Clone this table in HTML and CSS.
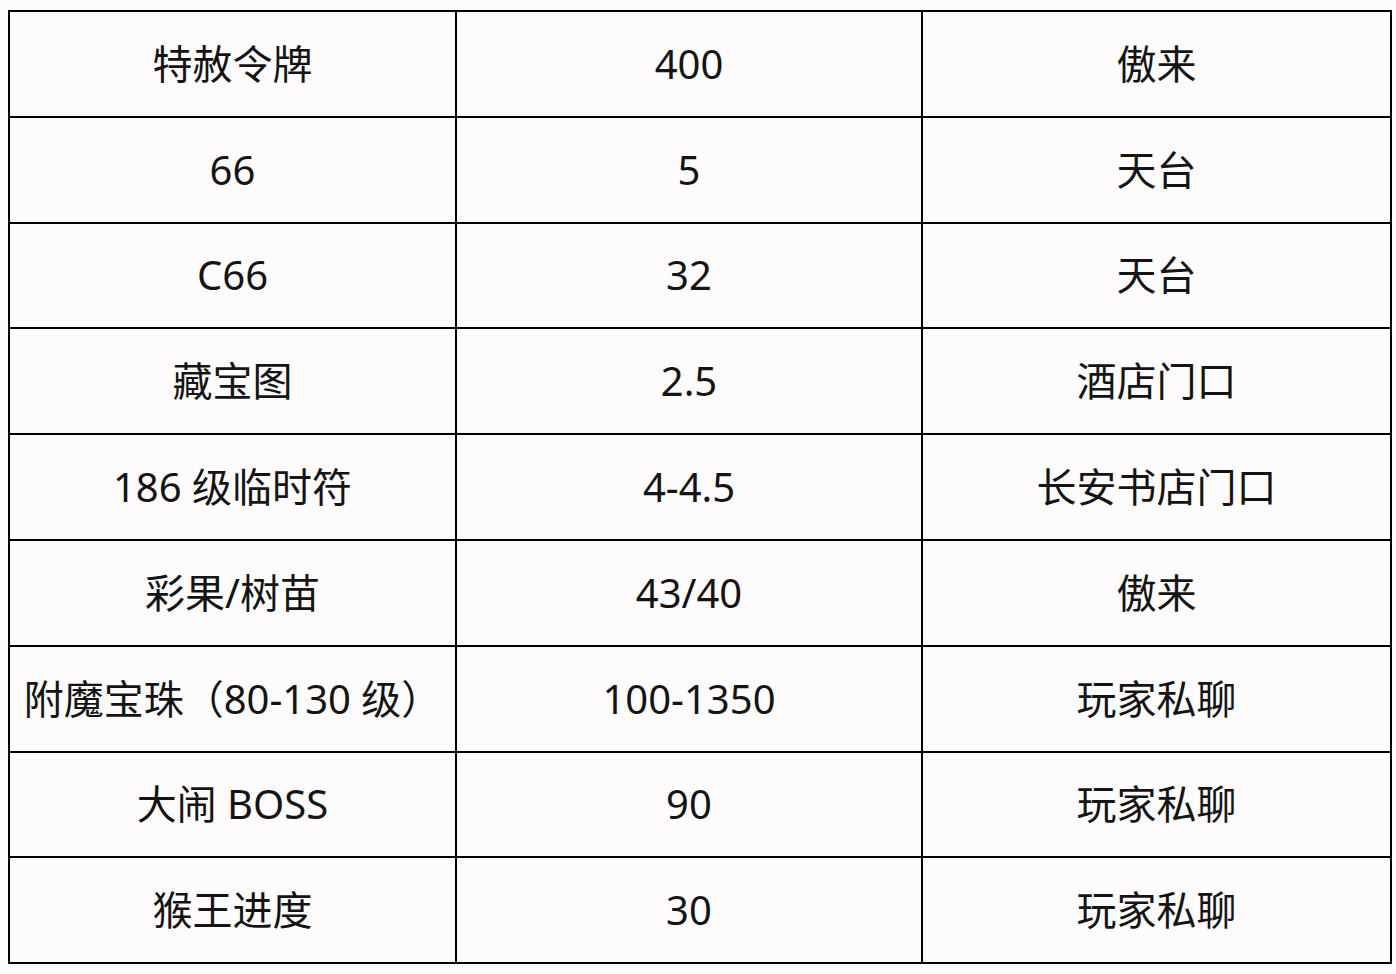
FILE: index.html
```html
<!DOCTYPE html>
<html lang="zh-CN">
<head>
<meta charset="utf-8">
<title>价格表</title>
<link rel="stylesheet" href="styles.css">
</head>
<body>
<table class="price-table">
  <colgroup>
    <col class="col-a">
    <col class="col-b">
    <col class="col-c">
  </colgroup>
  <tbody>
    <tr><td>特赦令牌</td><td>400</td><td>傲来</td></tr>
    <tr><td>66</td><td>5</td><td>天台</td></tr>
    <tr><td>C66</td><td>32</td><td>天台</td></tr>
    <tr><td>藏宝图</td><td>2.5</td><td>酒店门口</td></tr>
    <tr><td>186 级临时符</td><td>4-4.5</td><td>长安书店门口</td></tr>
    <tr><td>彩果/树苗</td><td>43/40</td><td>傲来</td></tr>
    <tr><td>附魔宝珠（80-130 级）</td><td>100-1350</td><td>玩家私聊</td></tr>
    <tr><td>大闹 BOSS</td><td>90</td><td>玩家私聊</td></tr>
    <tr><td>猴王进度</td><td>30</td><td>玩家私聊</td></tr>
  </tbody>
</table>
</body>
</html>
```

FILE: styles.css
```css
html, body {
  margin: 0;
  padding: 0;
  background: #fdfbfc;
}
body {
  padding: 10px 0 0 8px;
  font-family: "Noto Sans", "Noto Sans CJK SC", sans-serif;
  color: #141414;
}
.price-table {
  border-collapse: collapse;
  table-layout: fixed;
  width: 1382px;
}
.col-a { width: 447px; }
.col-b { width: 466px; }
.col-c { width: 469px; }
.price-table td {
  border: 2px solid #000;
  height: 103.8px;
  padding: 0;
  text-align: center;
  vertical-align: middle;
  font-size: 40px;
  line-height: 1;
  white-space: nowrap;
}
```
